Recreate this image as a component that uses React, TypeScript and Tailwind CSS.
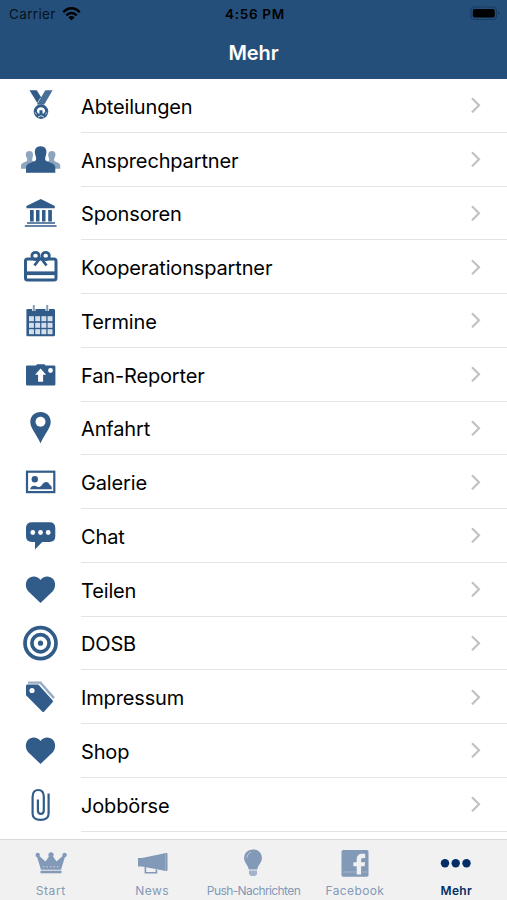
import React from 'react';

const Heart = () => (
  <path d="M20.500 33L8.200 21.200C5.200 18 5.200 12.300 7.700 9.300C11.200 5.200 17.700 5.600 20.500 10C23.300 5.600 29.800 5.200 33.300 9.300C35.800 12.300 35.800 18 32.800 21.200Z" />
);

const Medal = () => (
  <>
    <path d="M9.500 4.300h7.200l5 8-3.700 6z" />
    <path d="M25.300 4.300h7.300L24.300 18.500H17z" opacity="0.88" />
    <path d="M20.600 12l-3 5" stroke="white" strokeWidth="0.7" />
    <circle cx="21" cy="25.600" r="7.300" />
    <path d="M16.800 25.200c0-5.400 8.400-5.400 8.400 0l-1.400 2.200h-1.300v-3.200h-3v3.200h-1.300z" fill="white" />
    <path d="M14.800 26.500l2 1.800M27.200 26.500l-2 1.800M18 31l3-1.300 3 1.300" stroke="white" strokeWidth="0.8" fill="none" />
  </>
);

const People = () => (
  <>
    <g opacity="0.55">
      <path d="M9.500 11c3.500 0 4.100 3.300 3.100 6.400-.6 2-.9 3.100.4 3.800l4 2v5.500H1v-2.500c0-2.300 1-3.200 5.500-5 1.400-.6.7-2.400 0-4C5 14 6 11 9.500 11z" />
      <path d="M31.800 11c-3.500 0-4.100 3.300-3.100 6.400.6 2 .9 3.100-.4 3.800l-4 2v5.500h16v-2.500c0-2.300-1-3.200-5.500-5-1.400-.6-.7-2.400 0-4 1.500-3.200.5-6.200-3-6.200z" />
    </g>
    <path d="M20.600 6.200c5.300 0 6.800 4.200 5.300 9-.8 2.600-1.300 4.600.3 5.700 3.300 1.600 9.100 2.300 9.100 6.800v5H6v-5c0-4.500 5.800-5.200 9.100-6.800 1.600-1.100 1.100-3.100.3-5.700-1.500-4.800-.1-9 5.200-9z" />
  </>
);

const Bank = () => (
  <>
    <path d="M20.800 6L34.800 13v2.300H6.400V13z" />
    <path d="M10 17h3.700v11.500H10zM16 17h3.500v11.500H16zM22 17h3.500v11.500H22zM28.200 17h3.700v11.500h-3.700z" />
    <path d="M7 30h28M4.800 33h31.800" stroke="currentColor" strokeWidth="1.4" />
  </>
);

const Gift = () => (
  <>
    <g fill="none" stroke="currentColor" strokeWidth="3">
      <rect x="5.500" y="12" width="30.500" height="21" rx="2" />
      <circle cx="15.500" cy="8.900" r="3.600" strokeWidth="2.800" />
      <circle cx="25.700" cy="8.900" r="3.600" strokeWidth="2.800" />
      <path d="M20.500 10.500l-6 8M20.500 10.500l6 8" strokeWidth="2.800" />
    </g>
    <path d="M5 24.400h31v3.700H5z" />
  </>
);

const Calendar = () => (
  <>
    <rect x="6.400" y="8" width="28.600" height="27.300" rx="1.200" />
    <path d="M13.800 4v6M27.200 4v6" stroke="white" strokeWidth="3.4" />
    <path d="M13.800 4v6M27.200 4v6" stroke="currentColor" strokeWidth="2" opacity="0.6" />
    {[15.2, 21.8, 28.2].map((y) =>
      [9, 15.2, 21.4, 27.6].map((x) => (
        <rect key={`${x}-${y}`} x={x} y={y} width="4.900" height="5" fill="#d5dfeb" />
      )),
    )}
  </>
);

const Camera = () => (
  <>
    <path d="M7 10.500h9l1-1.300h7.500l1 1.300h8.700q1.200 0 1.200 1.200v17.500q0 1.200-1.200 1.200H7.200Q6 30.400 6 29.200V11.700Q6 10.500 7 10.500z" />
    <path d="M20.600 13.500l5.500 6.300h-3v6.900h-5v-6.900h-3z" fill="white" />
    <circle cx="30.500" cy="15.500" r="2.400" fill="white" />
  </>
);

const Pin = () => (
  <>
    <path d="M20.500 4c6 0 10.200 4.200 10.200 10 0 6-5.700 11.500-10.200 21.200C16 25.500 10.300 20 10.300 14 10.300 8.200 14.500 4 20.500 4z" />
    <circle cx="20.500" cy="13.800" r="5" fill="white" />
  </>
);

const Picture = () => (
  <>
    <rect x="7" y="9.700" width="27.300" height="20.400" fill="none" stroke="currentColor" strokeWidth="2.200" />
    <circle cx="14.800" cy="17.200" r="3.200" />
    <path d="M10 27.200c.8-2.700 3.200-3.800 5.500-3.200 1.600.4 3 1.500 4.500.8 2-.9 3-4.800 6.300-4.800 3 0 2.800 2.900 4 3.200 1.200.3 1.500 1.500 1.500 4z" />
  </>
);

const Chat = () => (
  <>
    <path d="M12 6.300h17.500q5.800 0 5.800 5.700v8.300q0 5.700-5.800 5.700h-7.300l-7.200 7.400V26h-3Q6 26 6 20.300V12q0-5.700 6-5.700z" />
    <g fill="white">
      <circle cx="12.800" cy="16.500" r="2.400" />
      <circle cx="20.500" cy="16.500" r="2.400" />
      <circle cx="28.200" cy="16.500" r="2.400" />
    </g>
  </>
);

const Target = () => (
  <>
    <g fill="none" stroke="currentColor" strokeWidth="3.700">
      <circle cx="20.500" cy="20.200" r="15.500" />
      <circle cx="20.500" cy="20.200" r="8.600" />
    </g>
    <circle cx="20.500" cy="20.200" r="2.600" />
  </>
);

const Tags = () => (
  <>
    <path d="M8 5.600h12.500l13.500 15.500" fill="none" stroke="currentColor" strokeWidth="2.400" opacity="0.5" />
    <path d="M7.300 7.500h11l14.200 15.700q1 1 .1 2l-8.400 9.400q-1 1-2 0L6 18.200V9Q6 7.500 7.300 7.500z" />
    <circle cx="12" cy="13.500" r="2.600" fill="white" />
  </>
);

const Paperclip = () => (
  <path
    d="M28.600 8.500v20.200c0 4-3.300 6.200-8 6.200s-8-2.200-8-6.200V11.800c0-4.200 2.200-6.800 5.600-6.800s5.600 2.600 5.600 6.800v13.400c0 2.500-1 3.700-3 3.700s-2.900-1.200-2.900-3.700V14.500"
    fill="none"
    stroke="currentColor"
    strokeWidth="2.200"
  />
);

const rows = [
  { label: 'Abteilungen', icon: Medal },
  { label: 'Ansprechpartner', icon: People },
  { label: 'Sponsoren', icon: Bank },
  { label: 'Kooperationspartner', icon: Gift },
  { label: 'Termine', icon: Calendar },
  { label: 'Fan-Reporter', icon: Camera },
  { label: 'Anfahrt', icon: Pin },
  { label: 'Galerie', icon: Picture },
  { label: 'Chat', icon: Chat },
  { label: 'Teilen', icon: Heart },
  { label: 'DOSB', icon: Target },
  { label: 'Impressum', icon: Tags },
  { label: 'Shop', icon: Heart },
  { label: 'Jobbörse', icon: Paperclip },
];

const Crown = () => (
  <>
    <path d="M6 19.800L1.800 6l2-.6L10.500 11.500 14.600 5.500h2.800L21.500 11.500l6.700-6.100 2 .6L26 19.800z" />
    <path d="M5.500 20.700h21v2.600h-21z" />
    <circle cx="2.700" cy="5" r="2.200" />
    <circle cx="16" cy="4.800" r="2.600" />
    <circle cx="29.600" cy="5" r="2.200" />
    <path d="M8 16.800h17" stroke="#f1f1f1" strokeWidth="1" strokeDasharray="1.500 2" opacity="0.7" />
  </>
);

const Megaphone = () => (
  <>
    <path d="M2 8h4l24-5q1.500-.3 1.500 1v16q0 1.300-1.500 1L6 16.500H2z" />
    <path d="M9.400 17v5.700h11V19.500" fill="none" stroke="currentColor" strokeWidth="1.600" />
    <path d="M29.300 4v16" stroke="#f1f1f1" strokeWidth="0.5" opacity="0.6" />
  </>
);

const Bulb = () => (
  <>
    <path d="M16-.5c5.500 0 8.900 3.700 8.900 8.700 0 4.500-4.100 6.800-4.600 11.300h-8.600C11.200 15 7.100 12.700 7.100 8.200 7.100 3.200 10.500-.5 16-.5z" />
    <path d="M10 8c0-3 1.600-5 4-5.700" fill="none" stroke="#f1f1f1" strokeWidth="1" opacity="0.5" />
    <path d="M12 20.500h8v3.700l-2 1.800h-4l-2-1.800z" opacity="0.7" />
  </>
);

const Facebook = () => (
  <>
    <rect x="2.500" y="0" width="27" height="26.700" rx="1.800" />
    <path
      d="M26.200 3.900v4h-2.100c-1.700 0-2 .9-2 2.200v2.200h4l-.5 3.900h-3.500v8.400h-4.400v-8.400h-3.300v-3.900h3.300V9.400c0-3.700 2.200-5.700 5.700-5.700 1.300 0 2.300.1 2.800.2z"
      fill="#f1f1f1"
    />
    <path d="M4 22h13M23 22h5.500" stroke="#f1f1f1" strokeWidth="0.6" opacity="0.6" />
  </>
);

const Dots = () => (
  <>
    <circle cx="5" cy="13.300" r="4.200" />
    <circle cx="15.700" cy="13.300" r="4.200" />
    <circle cx="26.500" cy="13.300" r="4.200" />
  </>
);

const tabs = [
  { label: 'Start', icon: Crown, style: 'text-[#8299b8] tracking-[0.6px]' },
  { label: 'News', icon: Megaphone, style: 'text-[#8299b8] tracking-[0.4px]' },
  { label: 'Push-Nachrichten', icon: Bulb, style: 'text-[#8299b8] tracking-[-0.6px]' },
  { label: 'Facebook', icon: Facebook, style: 'text-[#8299b8] tracking-[0.4px]' },
  { label: 'Mehr', icon: Dots, style: 'text-[#032f66] font-semibold tracking-[0.3px]' },
];

const App: React.FC = () => {
  return (
    <div className="flex h-[900px] w-[507px] flex-col overflow-hidden bg-white font-['Inter',sans-serif]">
      {/* Status bar and title */}
      <header className="h-[79px] shrink-0 bg-[#254f7b]">
        <div className="grid h-[27px] grid-cols-3 items-center pl-[9px] pr-[6px] text-[13.5px] text-[#07111c]">
          <div className="flex items-center gap-1.5">
            <span className="pt-px tracking-[0.35px]">Carrier</span>
            <svg width="19" height="14" viewBox="0 0 19 14" fill="none" stroke="black" strokeWidth="2.400">
              <path d="M1.300 5.200C6-.1 13-.1 17.700 5.200M4.300 8.300c3-3 7.400-3 10.400 0" />
              <path d="M6.300 10.300c1.900-1.700 4.500-1.700 6.400 0L9.500 13.600z" fill="black" stroke="none" />
            </svg>
          </div>
          <div className="whitespace-nowrap pt-px text-center font-semibold tracking-[0.7px] text-black">4:56 PM</div>
          <svg className="justify-self-end" width="31" height="15" viewBox="0 0 31 15">
            <rect x="1" y="1" width="25.500" height="12.500" rx="3.500" fill="none" stroke="#183d63" strokeWidth="1.200" />
            <rect x="2.800" y="3" width="22" height="8.500" rx="2" />
            <path d="M28 5v4q1.600-.7 1.600-2T28 5z" fill="#183d63" />
          </svg>
        </div>
        <h1 className="flex h-[51px] items-center justify-center text-[20px] font-semibold tracking-[-0.1px] text-white">
          Mehr
        </h1>
      </header>

      {/* Menu */}
      <ul className="h-[760px] shrink-0 overflow-hidden">
        {rows.map(({ label, icon: Icon }) => (
          <li key={label} className="flex h-[53.75px] items-center pl-5">
            <svg
              width="40"
              height="40"
              viewBox="0 0 40 40"
              className="shrink-0 overflow-visible text-[#315c8a]"
              fill="currentColor"
            >
              <Icon />
            </svg>
            <div className="ml-[21px] flex h-full flex-1 items-center justify-between border-b border-[#e4e4e6] pr-[26px]">
              <span className="pt-[3px] text-[20px] tracking-[-0.15px] text-black">{label}</span>
              <svg width="10" height="16" viewBox="0 0 10 16" fill="none" stroke="#c2c2c5" strokeWidth="2.200">
                <path d="M1 1.300l7 7-7 7" />
              </svg>
            </div>
          </li>
        ))}
      </ul>

      {/* Tab bar */}
      <nav className="grid h-[61px] shrink-0 grid-cols-5 border-t border-[#d9d9db] bg-[#f1f1f1]">
        {tabs.map(({ label, icon: Icon, style }) => (
          <div key={label} className={`flex flex-col items-center pt-[10px] ${style}`}>
            <svg width="32" height="26" viewBox="0 0 32 26" className="overflow-visible" fill="currentColor">
              <Icon />
            </svg>
            <span className="mt-[7px] whitespace-nowrap text-[12px] leading-[16px]">{label}</span>
          </div>
        ))}
      </nav>
    </div>
  );
};

export default App;
